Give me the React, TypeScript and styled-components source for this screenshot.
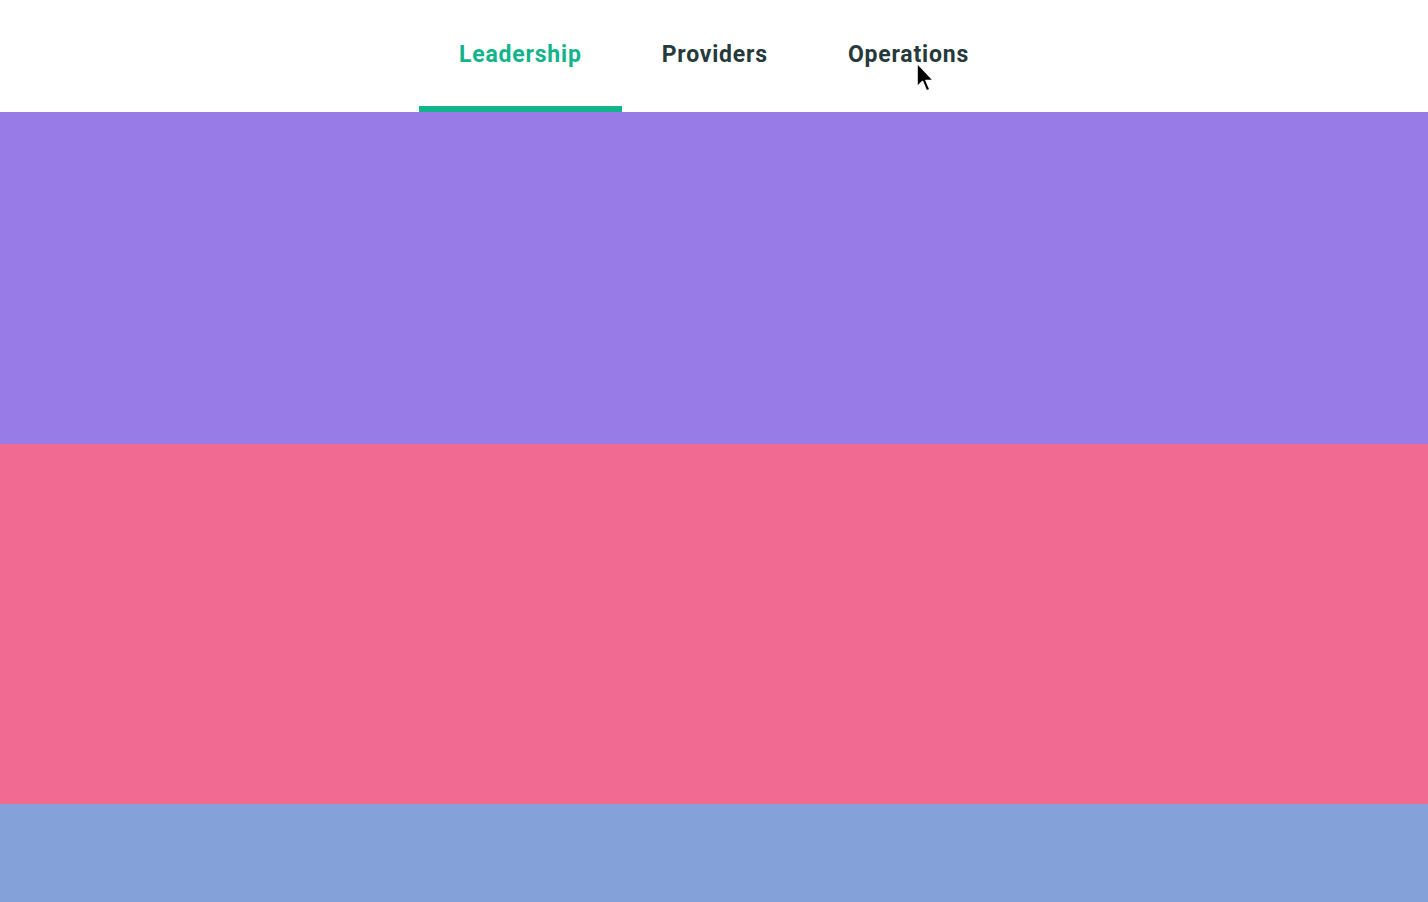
import React, { useState } from "react";
import styled, { createGlobalStyle } from "styled-components";

const Global = createGlobalStyle`
  html, body { margin: 0; padding: 0; height: 100%; background: #ffffff; }
  #root { height: 100%; }
  * { box-sizing: border-box; }
`;

const Page = styled.div`
  display: flex;
  flex-direction: column;
  height: 902px;
  font-family: Roboto, "Noto Sans", sans-serif;
  position: relative;
  overflow: hidden;
`;

const Header = styled.nav`
  height: 112px;
  display: flex;
  justify-content: center;
  background: #ffffff;
  flex-shrink: 0;
`;

const Tab = styled.button<{ $active?: boolean }>`
  appearance: none;
  border: none;
  background: transparent;
  padding: 40px 40px 0 40px;
  height: 112px;
  display: flex;
  align-items: flex-start;
  font-family: Roboto, "Noto Sans", sans-serif;
  font-size: 23px;
  font-weight: 700;
  letter-spacing: 0.8px;
  line-height: 30px;
  color: ${(p) => (p.$active ? "#13b38b" : "#263a3c")};
  border-bottom: 6px solid ${(p) => (p.$active ? "#13b38b" : "transparent")};
  cursor: pointer;
`;

const Band = styled.section<{ $color: string; $h: number }>`
  height: ${(p) => p.$h}px;
  background: ${(p) => p.$color};
  flex-shrink: 0;
`;

const Cursor = styled.svg`
  position: absolute;
  left: 915px;
  top: 61px;
  pointer-events: none;
`;

export default function App() {
  const [active, setActive] = useState("Leadership");
  const tabs = ["Leadership", "Providers", "Operations"];
  return (
    <>
      <Global />
      <Page>
        <Header>
          {tabs.map((t) => (
            <Tab key={t} $active={t === active} onClick={() => setActive(t)}>
              {t}
            </Tab>
          ))}
        </Header>
        <Band $color="#987be6" $h={332} />
        <Band $color="#f16a91" $h={360} />
        <Band $color="#84a1da" $h={98} />
        <Cursor width="22" height="36" viewBox="0 0 22 36">
          <path
            d="M2 2 L2 26 L7.5 20.5 L11.5 30 L15 28.5 L11 19.5 L18.5 19.5 Z"
            fill="#000"
            stroke="#fff"
            strokeWidth="1.6"
            strokeLinejoin="round"
          />
        </Cursor>
      </Page>
    </>
  );
}
